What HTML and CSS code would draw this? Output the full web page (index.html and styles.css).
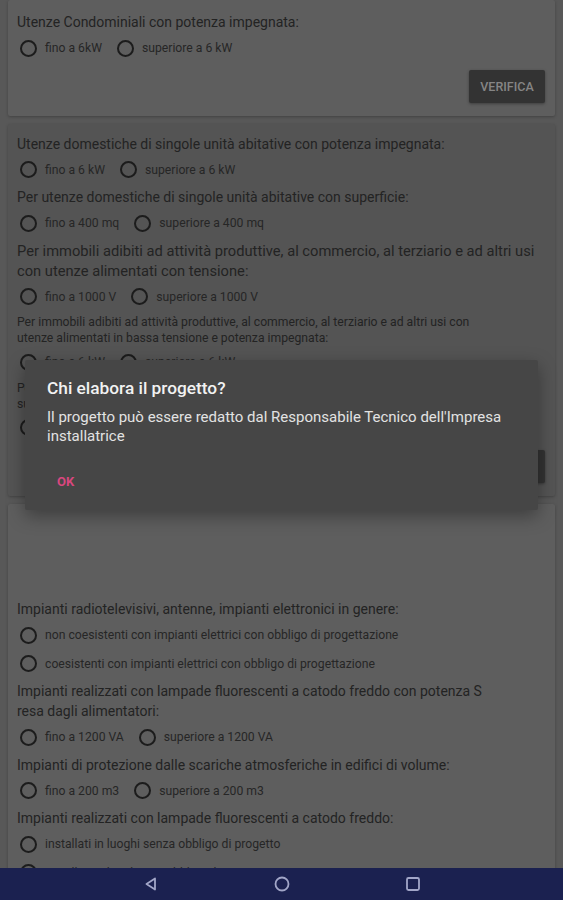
FILE: index.html
```html
<!DOCTYPE html>
<html lang="it">
<head>
    <meta charset="UTF-8">
    <meta name="viewport" content="width=device-width, initial-scale=1.0">
    <title>Verifica progetto</title>
    <link rel="stylesheet" href="styles.css">
</head>
<body>
    <div class="screen">
        <!-- Utenze condominiali -->
        <div class="card">
            <p class="question">Utenze Condominiali con potenza impegnata:</p>
            <div class="options">
                <label class="radio"><span class="dot"></span>fino a 6kW</label>
                <label class="radio"><span class="dot"></span>superiore a 6 kW</label>
            </div>
            <div class="actions"><button class="btn">VERIFICA</button></div>
        </div>

        <!-- Utenze domestiche / immobili -->
        <div class="card card-active">
            <p class="question">Utenze domestiche di singole unità abitative con potenza impegnata:</p>
            <div class="options">
                <label class="radio"><span class="dot"></span>fino a 6 kW</label>
                <label class="radio"><span class="dot"></span>superiore a 6 kW</label>
            </div>
            <p class="question">Per utenze domestiche di singole unità abitative con superficie:</p>
            <div class="options">
                <label class="radio"><span class="dot"></span>fino a 400 mq</label>
                <label class="radio"><span class="dot"></span>superiore a 400 mq</label>
            </div>
            <p class="question large">Per immobili adibiti ad attività produttive, al commercio, al terziario e ad altri usi con utenze alimentati con tensione:</p>
            <div class="options">
                <label class="radio"><span class="dot"></span>fino a 1000 V</label>
                <label class="radio"><span class="dot"></span>superiore a 1000 V</label>
            </div>
            <p class="question small">Per immobili adibiti ad attività produttive, al commercio, al terziario e ad altri usi con utenze alimentati in bassa tensione e potenza impegnata:</p>
            <div class="options">
                <label class="radio"><span class="dot"></span>fino a 6 kW</label>
                <label class="radio"><span class="dot"></span>superiore a 6 kW</label>
            </div>
            <p class="question small">Per immobili adibiti ad attività produttive, al commercio, al terziario e ad altri usi con superficie:</p>
            <div class="options">
                <label class="radio"><span class="dot"></span>fino a 200 mq</label>
                <label class="radio"><span class="dot"></span>superiore a 200 mq</label>
            </div>
            <div class="actions"><button class="btn">VERIFICA</button></div>
        </div>

        <!-- Impianti elettronici -->
        <div class="card card-narrow">
            <div class="spacer"></div>
            <p class="question">Impianti radiotelevisivi, antenne, impianti elettronici in genere:</p>
            <div class="options">
                <label class="radio"><span class="dot"></span>non coesistenti con impianti elettrici con obbligo di progettazione</label>
            </div>
            <div class="options">
                <label class="radio"><span class="dot"></span>coesistenti con impianti elettrici con obbligo di progettazione</label>
            </div>
            <p class="question">Impianti realizzati con lampade fluorescenti a catodo freddo con potenza S resa dagli alimentatori:</p>
            <div class="options">
                <label class="radio"><span class="dot"></span>fino a 1200 VA</label>
                <label class="radio"><span class="dot"></span>superiore a 1200 VA</label>
            </div>
            <p class="question">Impianti di protezione dalle scariche atmosferiche in edifici di volume:</p>
            <div class="options">
                <label class="radio"><span class="dot"></span>fino a 200 m3</label>
                <label class="radio"><span class="dot"></span>superiore a 200 m3</label>
            </div>
            <p class="question">Impianti realizzati con lampade fluorescenti a catodo freddo:</p>
            <div class="options">
                <label class="radio"><span class="dot"></span>installati in luoghi senza obbligo di progetto</label>
            </div>
            <div class="options">
                <label class="radio"><span class="dot"></span>installati in luoghi con obbligo di progetto</label>
            </div>
        </div>
    </div>

    <!-- Dialog -->
    <div class="dialog">
        <h2 class="dialog-title">Chi elabora il progetto?</h2>
        <p class="dialog-text">Il progetto può essere redatto dal Responsabile Tecnico dell'Impresa installatrice</p>
        <div class="dialog-actions"><button class="dialog-btn">OK</button></div>
    </div>

    <div class="navbar">
        <svg width="16" height="16" viewBox="0 0 16 16"><path d="M12 2.5 L3.5 8 L12 13.5 Z" fill="none" stroke="#a2a6c8" stroke-width="1.8" stroke-linejoin="round"/></svg>
        <svg width="18" height="18" viewBox="0 0 18 18"><circle cx="9" cy="9" r="6.5" fill="none" stroke="#a2a6c8" stroke-width="1.8"/></svg>
        <svg width="16" height="16" viewBox="0 0 16 16"><rect x="2" y="2" width="12" height="12" rx="1.5" fill="none" stroke="#a2a6c8" stroke-width="1.8"/></svg>
    </div>
</body>
</html>
```

FILE: styles.css
```css
body {
    margin: 0;
    background-color: #585858;
    font-family: Roboto, "Liberation Sans", sans-serif;
    color: #232323;
}

.screen {
    height: 868px;
    overflow: hidden;
}

.card {
    background: #5e5e5e;
    margin: 0 8px 8px;
    padding: 12px 10px 13px 9px;
    border-radius: 2px;
    box-shadow: 0 1px 3px rgba(0, 0, 0, 0.25);
}

.card-active {
    background: #545454;
    padding-top: 10px;
}

.card-narrow {
    padding-right: 50px;
}

.question {
    margin: 3px 0 2px;
    font-size: 14px;
    line-height: 20px;
}

.question:first-child {
    margin-top: 0;
}

.question.large {
    font-size: 14.7px;
}

.question.small {
    font-size: 12.2px;
    line-height: 16px;
    margin-top: 3px;
    padding-right: 60px;
}

.options {
    display: flex;
    align-items: center;
    height: 28.5px;
}

.radio {
    display: flex;
    align-items: center;
    font-size: 12.2px;
    color: #262626;
    margin-right: 12px;
    white-space: nowrap;
}

.dot {
    width: 13px;
    height: 13px;
    border: 2px solid #1c1c1c;
    border-radius: 50%;
    margin: 0 8px 0 3px;
}

.actions {
    display: flex;
    justify-content: flex-end;
    margin-top: 7px;
}

.card-active .actions {
    margin-top: 8px;
}

.btn {
    width: 76px;
    height: 33px;
    border: none;
    border-radius: 2px;
    background: #333333;
    color: #858585;
    font-family: Roboto, "Liberation Sans", sans-serif;
    font-size: 12.5px;
    font-weight: 500;
    box-shadow: 0 1px 3px rgba(0, 0, 0, 0.35);
}

.spacer {
    height: 80px;
}

.dialog {
    position: absolute;
    top: 360px;
    left: 25px;
    width: 513px;
    height: 150px;
    box-sizing: border-box;
    padding: 16px 22px 0;
    background: #464646;
    border-radius: 2px;
    box-shadow: 0 6px 18px rgba(0, 0, 0, 0.35);
}

.dialog-title {
    margin: 0;
    font-size: 17.3px;
    font-weight: 500;
    line-height: 24px;
    color: #f2f2f2;
}

.dialog-text {
    margin: 8px 0 0;
    font-size: 15px;
    line-height: 19px;
    color: #e2e2e2;
}

.dialog-actions {
    margin-top: 20px;
}

.dialog-btn {
    background: none;
    border: none;
    padding: 8px 10px;
    font-family: Roboto, "Liberation Sans", sans-serif;
    font-size: 13px;
    font-weight: 700;
    color: #d8477e;
}

.navbar {
    height: 32px;
    background: #1b2150;
    display: flex;
    align-items: center;
    justify-content: center;
    gap: 114px;
}
```
